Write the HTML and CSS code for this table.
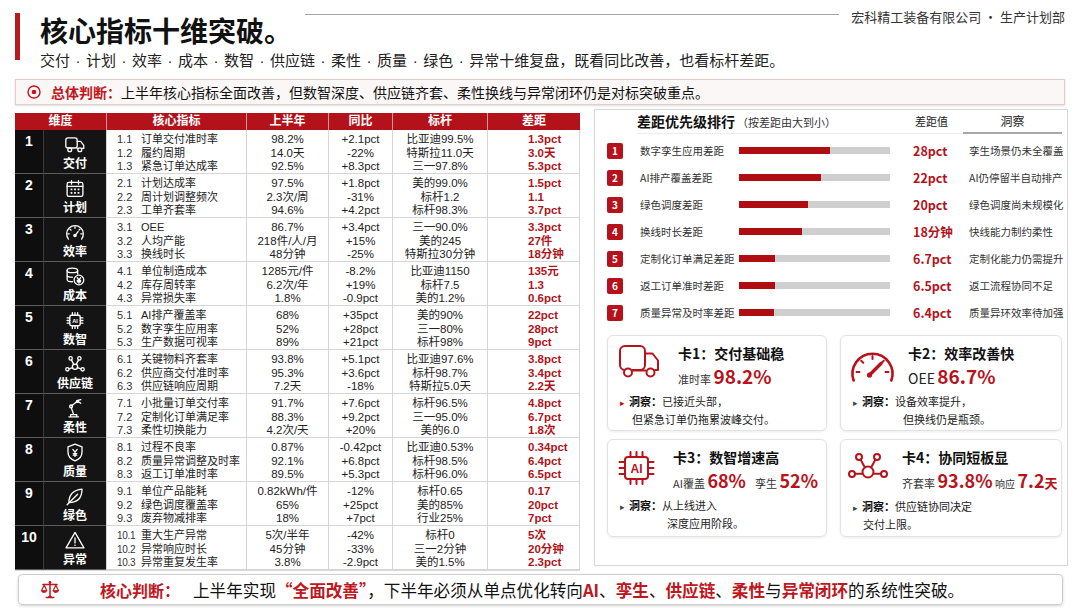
FILE: index.html
```html
<!DOCTYPE html>
<html lang="zh-CN">
<head>
<meta charset="utf-8">
<title>核心指标十维突破</title>
<link rel="stylesheet" href="styles.css">
</head>
<body>
<div class="page">
  <header class="hdr">
    <div class="hdr-bar"></div>
    <div class="hdr-main">
      <div class="hdr-top">
        <h1 class="title">核心指标十维突破。</h1>
        <div class="rule"></div>
        <div class="org">宏科精工装备有限公司 · 生产计划部</div>
      </div>
      <p class="sub">交付<span class="sep">·</span>计划<span class="sep">·</span>效率<span class="sep">·</span>成本<span class="sep">·</span>数智<span class="sep">·</span>供应链<span class="sep">·</span>柔性<span class="sep">·</span>质量<span class="sep">·</span>绿色<span class="sep">·</span>异常十维复盘，既看同比改善，也看标杆差距。</p>
    </div>
  </header>

  <div class="judge">
    <svg class="judge-ic" viewBox="0 0 14 14" width="14" height="14"><circle cx="7" cy="7" r="6" fill="none" stroke="#c0161d" stroke-width="1.4"/><circle cx="7" cy="7" r="2.3" fill="#c0161d"/></svg>
    <span class="judge-k">总体判断：</span><span>上半年核心指标全面改善，但数智深度、供应链齐套、柔性换线与异常闭环仍是对标突破重点。</span>
  </div>

  <div class="main">
    <div class="tbl">
      <div class="th th-dim">维度</div>
      <div class="th">核心指标</div>
      <div class="th">上半年</div>
      <div class="th">同比</div>
      <div class="th">标杆</div>
      <div class="th">差距</div>

      <!-- 1 -->
      <div class="num">1</div>
      <div class="dim"><svg class="ti" viewBox="0 0 24 24"><rect x="1.5" y="4.5" width="13" height="11.5" rx="2.5"/><path d="M14.5 8.5h4l3.5 4.5v3.5h-2.5M14.5 16.5h1"/><circle cx="6" cy="18" r="2.2"/><circle cx="17.5" cy="18" r="2.2"/></svg><span class="dl">交付</span></div>
      <div class="td nm"><span class="k">1.1</span>订单交付准时率<br><span class="k">1.2</span>履约周期<br><span class="k">1.3</span>紧急订单达成率</div>
      <div class="td">98.2%<br>14.0天<br>92.5%</div>
      <div class="td">+2.1pct<br>-22%<br>+8.3pct</div>
      <div class="td">比亚迪99.5%<br>特斯拉11.0天<br>三一97.8%</div>
      <div class="td gp">1.3pct<br>3.0天<br>5.3pct</div>

      <!-- 2 -->
      <div class="num">2</div>
      <div class="dim"><svg class="ti" viewBox="0 0 24 24"><rect x="3" y="5" width="18" height="16" rx="2"/><path d="M3 9.5h18M8 3v4M16 3v4"/><g class="tf"><rect x="7" y="12" width="2" height="2"/><rect x="11" y="12" width="2" height="2"/><rect x="15" y="12" width="2" height="2"/><rect x="7" y="16" width="2" height="2"/><rect x="11" y="16" width="2" height="2"/><rect x="15" y="16" width="2" height="2"/></g></svg><span class="dl">计划</span></div>
      <div class="td nm"><span class="k">2.1</span>计划达成率<br><span class="k">2.2</span>周计划调整频次<br><span class="k">2.3</span>工单齐套率</div>
      <div class="td">97.5%<br>2.3次/周<br>94.6%</div>
      <div class="td">+1.8pct<br>-31%<br>+4.2pct</div>
      <div class="td">美的99.0%<br>标杆1.2<br>标杆98.3%</div>
      <div class="td gp">1.5pct<br>1.1<br>3.7pct</div>

      <!-- 3 -->
      <div class="num">3</div>
      <div class="dim"><svg class="ti" viewBox="0 0 24 24"><path d="M4.5 19.5A9.5 9.5 0 1 1 19.5 19.5"/><path d="M12 5.5v1.6M6.4 8.2l1.1 1.1M17.6 8.2l-1.1 1.1M3.8 13.5h1.6M20.2 13.5h-1.6M12 15.5l3.5-4.5"/><circle cx="12" cy="15.5" r="1.3"/></svg><span class="dl">效率</span></div>
      <div class="td nm"><span class="k">3.1</span>OEE<br><span class="k">3.2</span>人均产能<br><span class="k">3.3</span>换线时长</div>
      <div class="td">86.7%<br>218件/人/月<br>48分钟</div>
      <div class="td">+3.4pct<br>+15%<br>-25%</div>
      <div class="td">三一90.0%<br>美的245<br>特斯拉30分钟</div>
      <div class="td gp">3.3pct<br>27件<br>18分钟</div>

      <!-- 4 -->
      <div class="num">4</div>
      <div class="dim"><svg class="ti" viewBox="0 0 24 24"><ellipse cx="9" cy="5" rx="6" ry="2.5"/><path d="M3 5v10.5c0 1.4 2.7 2.5 6 2.5M15 5v4M3 10.3c0 1.4 2.7 2.5 6 2.5"/><circle cx="16.5" cy="16" r="5.5"/><path d="M14.5 13.3l2 2.6 2-2.6M16.5 15.9v3.8M14.6 16.6h3.8M14.6 18.2h3.8"/></svg><span class="dl">成本</span></div>
      <div class="td nm"><span class="k">4.1</span>单位制造成本<br><span class="k">4.2</span>库存周转率<br><span class="k">4.3</span>异常损失率</div>
      <div class="td">1285元/件<br>6.2次/年<br>1.8%</div>
      <div class="td">-8.2%<br>+19%<br>-0.9pct</div>
      <div class="td">比亚迪1150<br>标杆7.5<br>美的1.2%</div>
      <div class="td gp">135元<br>1.3<br>0.6pct</div>

      <!-- 5 -->
      <div class="num">5</div>
      <div class="dim"><svg class="ti" viewBox="0 0 24 24"><rect x="6" y="6" width="12" height="12" rx="2"/><path d="M9 3v3M12 3v3M15 3v3M9 18v3M12 18v3M15 18v3M3 9h3M3 12h3M3 15h3M18 9h3M18 12h3M18 15h3"/><text x="12" y="14.6" class="tt">AI</text></svg><span class="dl">数智</span></div>
      <div class="td nm"><span class="k">5.1</span>AI排产覆盖率<br><span class="k">5.2</span>数字孪生应用率<br><span class="k">5.3</span>生产数据可视率</div>
      <div class="td">68%<br>52%<br>89%</div>
      <div class="td">+35pct<br>+28pct<br>+21pct</div>
      <div class="td">美的90%<br>三一80%<br>标杆98%</div>
      <div class="td gp">22pct<br>28pct<br>9pct</div>

      <!-- 6 -->
      <div class="num">6</div>
      <div class="dim"><svg class="ti" viewBox="0 0 24 24"><circle cx="12" cy="14.5" r="3"/><circle cx="7" cy="5" r="1.9"/><circle cx="17" cy="5" r="1.9"/><circle cx="3.3" cy="17.5" r="1.9"/><circle cx="20.7" cy="17.5" r="1.9"/><path d="M10.6 11.9L7.9 6.7M13.4 11.9l2.7-5.2M9.2 15.5l-4 1.4M14.8 15.5l4 1.4"/></svg><span class="dl">供应链</span></div>
      <div class="td nm"><span class="k">6.1</span>关键物料齐套率<br><span class="k">6.2</span>供应商交付准时率<br><span class="k">6.3</span>供应链响应周期</div>
      <div class="td">93.8%<br>95.3%<br>7.2天</div>
      <div class="td">+5.1pct<br>+3.6pct<br>-18%</div>
      <div class="td">比亚迪97.6%<br>标杆98.7%<br>特斯拉5.0天</div>
      <div class="td gp">3.8pct<br>3.4pct<br>2.2天</div>

      <!-- 7 -->
      <div class="num">7</div>
      <div class="dim"><svg class="ti" viewBox="0 0 24 24"><path d="M5 21.5h11M7 21.5v-2.5h7v2.5M10.5 19L7.5 10.5M8.6 8.6l5.4-4.2M15.6 4.2l3 1.8M15.2 2.6l3.4-0.8"/><circle cx="7.5" cy="9.6" r="1.6"/><circle cx="14.8" cy="3.9" r="1.2"/></svg><span class="dl">柔性</span></div>
      <div class="td nm"><span class="k">7.1</span>小批量订单交付率<br><span class="k">7.2</span>定制化订单满足率<br><span class="k">7.3</span>柔性切换能力</div>
      <div class="td">91.7%<br>88.3%<br>4.2次/天</div>
      <div class="td">+7.6pct<br>+9.2pct<br>+20%</div>
      <div class="td">标杆96.5%<br>三一95.0%<br>美的6.0</div>
      <div class="td gp">4.8pct<br>6.7pct<br>1.8次</div>

      <!-- 8 -->
      <div class="num">8</div>
      <div class="dim"><svg class="ti" viewBox="0 0 24 24"><path d="M12 2.5l8 3v6c0 5-3.5 8.5-8 10-4.5-1.5-8-5-8-10v-6z"/><path d="M9.5 8.5l2.5 3 2.5-3M12 11.5v5M10 13.2h4M10 15h4"/></svg><span class="dl">质量</span></div>
      <div class="td nm"><span class="k">8.1</span>过程不良率<br><span class="k">8.2</span>质量异常调整及时率<br><span class="k">8.3</span>返工订单准时率</div>
      <div class="td">0.87%<br>92.1%<br>89.5%</div>
      <div class="td">-0.42pct<br>+6.8pct<br>+5.3pct</div>
      <div class="td">比亚迪0.53%<br>标杆98.5%<br>标杆96.0%</div>
      <div class="td gp">0.34pct<br>6.4pct<br>6.5pct</div>

      <!-- 9 -->
      <div class="num">9</div>
      <div class="dim"><svg class="ti" viewBox="0 0 24 24"><path d="M5 19C5 10 10 4.5 20 3.5c0 10-5.5 15.5-15 15.5z"/><path d="M3 21.5L15 9.5"/></svg><span class="dl">绿色</span></div>
      <div class="td nm"><span class="k">9.1</span>单位产品能耗<br><span class="k">9.2</span>绿色调度覆盖率<br><span class="k">9.3</span>废弃物减排率</div>
      <div class="td">0.82kWh/件<br>65%<br>18%</div>
      <div class="td">-12%<br>+25pct<br>+7pct</div>
      <div class="td">标杆0.65<br>美的85%<br>行业25%</div>
      <div class="td gp">0.17<br>20pct<br>7pct</div>

      <!-- 10 -->
      <div class="num">10</div>
      <div class="dim"><svg class="ti" viewBox="0 0 24 24"><path d="M12 2.8L22.2 20.5H1.8z"/><path d="M12 9v5.8"/><circle cx="12" cy="17.4" r="0.9" class="tf"/></svg><span class="dl">异常</span></div>
      <div class="td nm"><span class="k ks">10.1</span>重大生产异常<br><span class="k ks">10.2</span>异常响应时长<br><span class="k ks">10.3</span>异常重复发生率</div>
      <div class="td">5次/半年<br>45分钟<br>3.8%</div>
      <div class="td">-42%<br>-33%<br>-2.9pct</div>
      <div class="td">标杆0<br>三一2分钟<br>美的1.5%</div>
      <div class="td gp">5次<br>20分钟<br>2.3pct</div>
    </div>

    <div class="panel">
      <div class="rk-hd">
        <div class="rk-title">差距优先级排行<span class="rk-sub">（按差距由大到小）</span></div>
        <div class="rk-vh">差距值</div>
        <div class="rk-ih">洞察</div>
      </div>
      <div class="rk-list">
        <div class="rk"><span class="bd">1</span><span class="rl">数字孪生应用差距</span><div class="bar"><div class="fill" style="width:60%"></div></div><span></span><span class="rv">28pct</span><span class="ri">孪生场景仍未全覆盖</span></div>
        <div class="rk"><span class="bd">2</span><span class="rl">AI排产覆盖差距</span><div class="bar"><div class="fill" style="width:54%"></div></div><span></span><span class="rv">22pct</span><span class="ri">AI仍停留半自动排产</span></div>
        <div class="rk"><span class="bd">3</span><span class="rl">绿色调度差距</span><div class="bar"><div class="fill" style="width:46%"></div></div><span></span><span class="rv">20pct</span><span class="ri">绿色调度尚未规模化</span></div>
        <div class="rk"><span class="bd">4</span><span class="rl">换线时长差距</span><div class="bar"><div class="fill" style="width:42%"></div></div><span></span><span class="rv">18分钟</span><span class="ri">快线能力制约柔性</span></div>
        <div class="rk"><span class="bd">5</span><span class="rl">定制化订单满足差距</span><div class="bar"><div class="fill" style="width:24%"></div></div><span></span><span class="rv">6.7pct</span><span class="ri">定制化能力仍需提升</span></div>
        <div class="rk"><span class="bd">6</span><span class="rl">返工订单准时差距</span><div class="bar"><div class="fill" style="width:24%"></div></div><span></span><span class="rv">6.5pct</span><span class="ri">返工流程协同不足</span></div>
        <div class="rk"><span class="bd">7</span><span class="rl">质量异常及时率差距</span><div class="bar"><div class="fill" style="width:23%"></div></div><span></span><span class="rv">6.4pct</span><span class="ri">质量异环效率待加强</span></div>
      </div>

      <div class="cards">
        <div class="card">
          <div class="ch">
            <div class="ci ci-1"><svg width="42" height="35" viewBox="0 0 42 35" class="ri-ic"><rect x="2" y="2" width="25" height="24" rx="5"/><path d="M27 9.5h7.5l5.5 7v9.5h-3"/><path d="M14.5 26.5h13"/><circle cx="10" cy="28.5" r="4" class="wf"/><circle cx="32.5" cy="28.5" r="4" class="wf"/></svg></div>
            <div class="ct">
              <div class="ctt">卡1：交付基础稳</div>
              <div class="cm">准时率 <span class="big">98.2%</span></div>
            </div>
          </div>
          <div class="cin"><span class="tri tri-r">▸</span><b>洞察：</b>已接近头部，<span class="l2 i-12">但紧急订单仍拖累波峰交付。</span></div>
        </div>

        <div class="card">
          <div class="ch">
            <div class="ci ci-2"><svg width="49" height="37" viewBox="0 0 49 37" class="ri-ic"><path d="M5.7 31.5A20 20 0 1 1 43.3 31.5" stroke-width="2.6"/><path d="M8.5 23h3M13.2 11.7l2.1 2.1M24.5 7v3M35.8 11.7l-2.1 2.1M40.5 23h-3"/><path d="M21 26.5L33 14.5" stroke-width="3.4"/><circle cx="21.5" cy="26" r="2.6" class="rf"/></svg></div>
            <div class="ct">
              <div class="ctt">卡2：效率改善快</div>
              <div class="cm"><span class="oee">OEE</span> <span class="big">86.7%</span></div>
            </div>
          </div>
          <div class="cin"><span class="tri">▸</span><b>洞察：</b>设备效率提升，<span class="l2 i-50">但换线仍是瓶颈。</span></div>
        </div>

        <div class="card">
          <div class="ch">
            <div class="ci ci-3"><svg width="37" height="36" viewBox="0 0 37 36" class="ri-ic"><rect x="7" y="7" width="23" height="22" rx="3"/><path d="M12.5 2v5M18.5 2v5M24.5 2v5M12.5 29v5M18.5 29v5M24.5 29v5M1.5 12h5.5M1.5 18h5.5M1.5 24h5.5M30 12h5.5M30 18h5.5M30 24h5.5"/><text x="18.5" y="22.5" class="ai-t">AI</text></svg></div>
            <div class="ct">
              <div class="ctt">卡3：数智增速高</div>
              <div class="cm">AI覆盖 <span class="big big-s">68%</span><span class="gap-s"></span>孪生 <span class="big big-s">52%</span></div>
            </div>
          </div>
          <div class="cin"><span class="tri">▸</span><b>洞察：</b>从上线进入<span class="l2 i-47">深度应用阶段。</span></div>
        </div>

        <div class="card">
          <div class="ch">
            <div class="ci ci-4"><svg width="40" height="27" viewBox="0 0 40 27" class="ri-ic"><circle cx="11" cy="4" r="3"/><circle cx="29" cy="4" r="3"/><circle cx="4" cy="21" r="3"/><circle cx="36" cy="21" r="3"/><circle cx="20" cy="19" r="5.5"/><path d="M12.5 6.6l4.4 7.9M27.5 6.6l-4.4 7.9M7 20.7h7.5M33 20.7h-7.5"/></svg></div>
            <div class="ct">
              <div class="ctt">卡4：协同短板显</div>
              <div class="cm">齐套率 <span class="big big-s">93.8%</span> <span class="sm">响应</span> <span class="big big-s">7.2</span><span class="day">天</span></div>
            </div>
          </div>
          <div class="cin"><span class="tri">▸</span><b>洞察：</b>供应链协同决定<span class="l2 i-10">交付上限。</span></div>
        </div>
      </div>
    </div>
  </div>

  <div class="concl">
    <svg class="scale" width="20" height="21" viewBox="0 0 24 24"><path d="M12 3v15M3.5 6h17M7.5 21.5h9" fill="none" stroke="#c0161d" stroke-width="1.8" stroke-linecap="round"/><path d="M5 6.5L1.8 13.5h6.4zM19 6.5l-3.2 7h6.4z" fill="none" stroke="#c0161d" stroke-width="1.4" stroke-linejoin="round"/><path d="M1.8 13.5a3.2 2.6 0 0 0 6.4 0zM15.8 13.5a3.2 2.6 0 0 0 6.4 0zM9 21.5l3-3.5 3 3.5z" fill="#c0161d"/><circle cx="12" cy="3.2" r="1.5" fill="#c0161d"/></svg>
    <span class="concl-k">核心判断：</span>
    <span class="concl-t">上半年实现<em>“全面改善”</em>，下半年必须从单点优化转向<em>AI</em>、<em>孪生</em>、<em>供应链</em>、<em>柔性</em>与<em>异常闭环</em>的系统性突破。</span>
  </div>
</div>
</body>
</html>
```

FILE: styles.css
```css
* { box-sizing: border-box; margin: 0; padding: 0; }
body {
  margin: 0;
  background: #fff;
  font-family: "Noto Sans CJK SC", "Noto Sans", sans-serif;
  color: #1a1a1a;
}
.page {
  width: 1080px;
  height: 608px;
  padding: 10px 15px 0 15px;
  overflow: hidden;
}

/* header */
.hdr { display: flex; }
.hdr-bar {
  flex: none;
  width: 5px;
  height: 47px;
  margin-top: 3px;
  margin-right: 20px;
  background: #b71c1c;
}
.hdr-main { flex: 1; }
.hdr-top { display: flex; align-items: flex-start; }
.title {
  font-size: 28px;
  line-height: 34px;
  font-weight: 700;
  margin-top: 3px;
  color: #111;
}
.rule {
  flex: 1;
  height: 1px;
  background: #a3a3a3;
  margin: 4px 12px 0 13px;
}
.org { font-size: 13px; line-height: 14px; color: #333; }
.sub { font-size: 15px; line-height: 20px; margin-top: 3px; color: #222; }
.sep { font-family: "Liberation Sans", sans-serif; margin: 0 5.5px; }

/* overall judgement */
.judge {
  margin-top: 8px;
  height: 26px;
  display: flex;
  align-items: center;
  padding-left: 11px;
  border: 1px solid #e4cccc;
  background: #fcf7f7;
  box-shadow: 0 1px 2px rgba(0, 0, 0, 0.15);
  font-size: 14px;
  color: #111;
}
.judge-ic { flex: none; margin-right: 10px; }
.judge-k { color: #c0161d; font-weight: 700; }

/* main */
.main {
  display: flex;
  gap: 14px;
  width: 1053px;
  margin-top: 4px;
  align-items: flex-start;
}

/* table */
.tbl {
  flex: none;
  margin-top: 4px;
  width: 565px;
  display: grid;
  grid-template-columns: 28px 63px 140px 82px 64px 95px 93px;
  grid-template-rows: 17px repeat(10, 44px);
  border-right: 1px solid #d6d6d6;
  border-bottom: 1px solid #d6d6d6;
  font-family: "Liberation Sans", "Noto Sans CJK SC", sans-serif;
}
.th {
  background: #b3121a;
  color: #fff;
  font-size: 12px;
  font-weight: 700;
  line-height: 17px;
  text-align: center;
  border-left: 1px solid rgba(255, 255, 255, 0.55);
}
.th-dim { grid-column: span 2; border-left: none; }
.num {
  background: #0e0e0e;
  color: #fff;
  font-size: 14px;
  font-weight: 700;
  line-height: 14px;
  padding-top: 4px;
  text-align: center;
  border-bottom: 1px solid #5c5c5c;
}
.dim {
  background: #141414;
  border-left: 1px solid #3c3c3c;
  border-bottom: 1px solid #5c5c5c;
  display: flex;
  flex-direction: column;
  align-items: center;
  justify-content: space-between;
  padding: 4px 0 2px;
}
.ti {
  width: 22px;
  height: 21px;
  fill: none;
  stroke: #fff;
  stroke-width: 1.5;
  stroke-linecap: round;
  stroke-linejoin: round;
}
.ti .tf { fill: #fff; stroke: none; }
.ti .tt { fill: #fff; stroke: none; font-size: 6.5px; font-weight: 700; text-anchor: middle; font-family: "Liberation Sans", sans-serif; }
.dl { color: #fff; font-size: 12px; font-weight: 700; line-height: 14px; }
.td {
  border-left: 1px solid #d6d6d6;
  border-bottom: 1px solid #d6d6d6;
  padding-top: 3px;
  font-size: 11.5px;
  line-height: 13.6px;
  text-align: center;
  color: #222;
  white-space: nowrap;
}
.nm { text-align: left; padding-left: 10px; font-size: 11px; }
.k { display: inline-block; width: 24px; color: #333; }
.ks { font-size: 10px; letter-spacing: -0.3px; }
.gp { text-align: left; padding-left: 40px; color: #b0141b; font-weight: 700; }

/* right panel */
.panel {
  flex: none;
  width: 474px;
  height: 457px;
  border: 1px solid #d9d9d9;
  padding: 0 5px 0 12px;
  box-shadow: 0 0 2px rgba(0, 0, 0, 0.06);
}
.rk-hd { display: flex; height: 24px; }
.rk-title {
  margin-left: 30px;
  width: 276px;
  line-height: 23px;
  border-bottom: 1px solid #ececec;
  font-size: 14px;
  font-weight: 700;
  color: #111;
}
.rk-sub { font-size: 11px; font-weight: 400; color: #333; margin-left: 2px; }
.rk-vh {
  width: 50px;
  line-height: 23px;
  font-size: 11px;
  padding-left: 2px;
  color: #222;
  border-bottom: 1px solid #ececec;
}
.rk-ih {
  width: 99px;
  line-height: 22px;
  text-align: center;
  font-size: 12px;
  color: #222;
  border-bottom: 2px solid #a8a8a8;
}
.rk-list { margin-top: 3px; }
.rk {
  display: grid;
  grid-template-columns: 33px 99px 151px 23px 56px 1fr;
  height: 27px;
  align-items: center;
}
.bd {
  width: 16px;
  height: 16px;
  background: #b5121b;
  color: #fff;
  font-size: 10px;
  font-weight: 700;
  line-height: 16px;
  text-align: center;
  border-radius: 2px;
}
.rl { font-size: 10.5px; color: #333; white-space: nowrap; }
.bar { height: 7px; background: #cfcfcf; }
.fill { height: 100%; background: #b00d13; }
.rv { font-size: 12.5px; font-weight: 700; color: #b3141b; white-space: nowrap; }
.ri { font-size: 10.5px; color: #333; white-space: nowrap; }

/* cards */
.cards {
  display: grid;
  grid-template-columns: 220px 222px;
  grid-template-rows: 96px 98px;
  column-gap: 13px;
  row-gap: 8px;
  margin-top: 9px;
}
.card {
  border: 1px solid #e2e2e2;
  border-radius: 6px;
  box-shadow: 0 1px 3px rgba(0, 0, 0, 0.08);
  padding: 8px 6px 0 7px;
}
.ch { display: flex; }
.ci { flex: none; }
.ci-1 { width: 63px; padding-left: 3px; }
.ci-2 { width: 60px; padding-top: 5px; }
.ci-3 { width: 58px; padding-left: 3px; padding-top: 2px; }
.ci-4 { width: 54px; padding-top: 5px; }
.ci svg { display: block; }
.ri-ic {
  fill: none;
  stroke: #b8121b;
  stroke-width: 2;
  stroke-linecap: round;
  stroke-linejoin: round;
}
.ri-ic .wf { fill: #fff; }
.ri-ic .rf { fill: #b8121b; stroke: none; }
.ri-ic .ai-t { fill: #b8121b; stroke: none; font-size: 12px; font-weight: 700; text-anchor: middle; font-family: "Liberation Sans", sans-serif; }
.ct { min-width: 0; }
.ctt { font-size: 14px; font-weight: 700; line-height: 18px; color: #111; }
.cm {
  margin-top: 5px;
  line-height: 18px;
  white-space: nowrap;
  font-size: 11px;
  color: #333;
}
.big { font-size: 19px; font-weight: 700; color: #b8121b; }
.big-s { font-size: 18px; }
.oee { font-size: 14px; color: #222; }
.sm { font-size: 10px; }
.day { font-size: 13px; font-weight: 700; color: #b8121b; }
.gap-s { display: inline-block; width: 9px; }
.cin {
  margin-top: 5px;
  margin-left: 5px;
  font-size: 11px;
  line-height: 17px;
  color: #222;
  white-space: nowrap;
}
.cin b { font-weight: 700; color: #111; }
.tri { font-size: 9px; color: #444; margin-right: 4px; }
.tri-r { color: #b8121b; }
.l2 { display: block; }
.i-10 { padding-left: 10px; }
.i-12 { padding-left: 12px; }
.i-47 { padding-left: 47px; }
.i-50 { padding-left: 50px; }

/* conclusion */
.concl {
  margin-top: 3px;
  margin-left: 3px;
  width: 1045px;
  height: 31px;
  border: 1px solid #cfcfcf;
  border-radius: 4px;
  box-shadow: 0 1px 3px rgba(0, 0, 0, 0.18);
  display: flex;
  align-items: center;
  padding-left: 21px;
  font-size: 16px;
  color: #111;
}
.scale { flex: none; }
.concl-k { margin-left: 40px; color: #c0161d; font-weight: 700; }
.concl-t { margin-left: 13px; white-space: nowrap; font-size: 16.6px; }
.concl-t em { font-style: normal; color: #c0161d; font-weight: 700; }
```
